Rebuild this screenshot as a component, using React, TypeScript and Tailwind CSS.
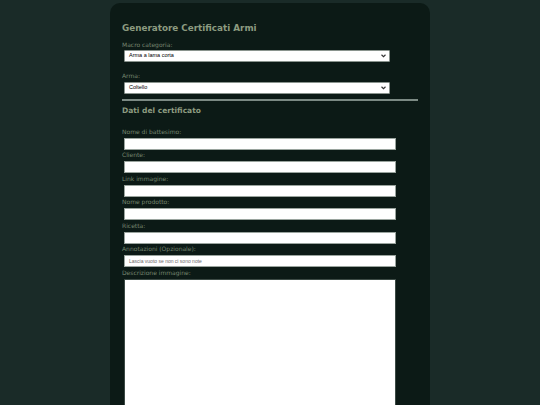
const fields = [
  { label: "Nome di battesimo:", placeholder: "" },
  { label: "Cliente:", placeholder: "" },
  { label: "Link immagine:", placeholder: "" },
  { label: "Nome prodotto:", placeholder: "" },
  { label: "Ricetta:", placeholder: "" },
  { label: "Annotazioni (Opzionale):", placeholder: "Lascia vuoto se non ci sono note" },
];

function Select({ value }: { value: string }) {
  return (
    <div className="ml-[2px] flex h-[12px] w-[266px] items-center justify-between rounded-[1px] border border-[#8a948e] bg-white pl-[4px] pr-[3px]">
      <span className="font-['Liberation_Sans',Arial,sans-serif] text-[5.5px] leading-none text-black">{value}</span>
      <svg width="5" height="4" viewBox="0 0 10 8" className="text-[#333]">
        <path d="M1 1.5 L5 5.5 L9 1.5" fill="none" stroke="currentColor" strokeWidth="2.2" />
      </svg>
    </div>
  );
}

export default function App() {
  return (
    <div className="flex min-h-[405px] justify-center overflow-hidden bg-[#1a2b28] font-['DejaVu_Sans',Verdana,sans-serif]">
      <div className="mt-[3px] h-[420px] w-[320px] rounded-t-[10px] bg-[#0c1a16] px-[12px] pt-[19px]">
        <h1 className="text-[8.8px] font-bold leading-[12px] text-[#8c9b80]">Generatore Certificati Armi</h1>

        <div className="mt-[7px] text-[6px] leading-[8px] text-[#76856f]">Macro categoria:</div>
        <div className="mt-[1px]">
          <Select value="Arma a lama corta" />
        </div>

        <div className="mt-[10px] text-[6px] leading-[8px] text-[#76856f]">Arma:</div>
        <div className="mt-[2px]">
          <Select value="Coltello" />
        </div>

        <div className="mt-[5px] h-[1.5px] w-full bg-[#7c8a84]" />

        <h2 className="mt-[5px] text-[7.5px] font-bold leading-[10px] text-[#8c9b80]">Dati del certificato</h2>

        <div className="mt-[12px] flex flex-col">
          {fields.map((f) => (
            <div key={f.label} className="mb-[1.5px] flex flex-col">
              <label className="text-[6px] leading-[8px] text-[#76856f]">{f.label}</label>
              <div className="ml-[2px] mt-[2px] flex h-[12px] w-[272px] items-center border border-[#9aa49e] bg-white px-[4px]">
                <span className="font-['Liberation_Sans',Arial,sans-serif] text-[5px] leading-none text-[#6b6b6b]">{f.placeholder}</span>
              </div>
            </div>
          ))}
          <label className="text-[6px] leading-[8px] text-[#76856f]">Descrizione immagine:</label>
          <div className="ml-[2px] mt-[2px] h-[140px] w-[272px] border border-[#3c4a45] bg-white" />
        </div>
      </div>
    </div>
  );
}
